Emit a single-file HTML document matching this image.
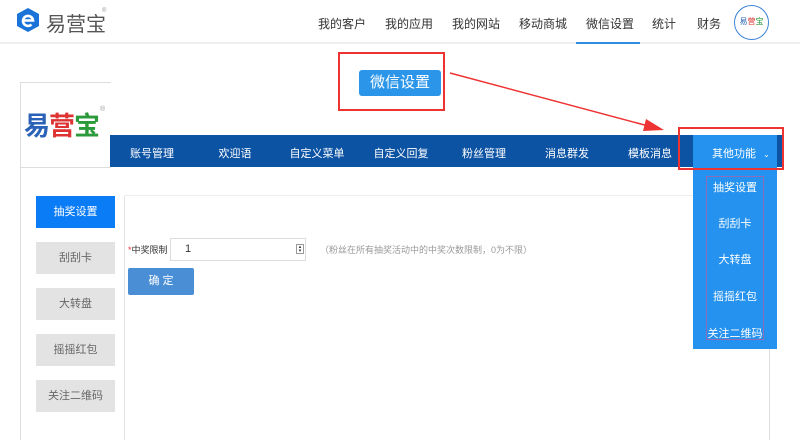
<!DOCTYPE html>
<html><head><meta charset="utf-8"><style>
*{margin:0;padding:0;box-sizing:border-box}
body{width:800px;height:440px;overflow:hidden;background:#fff;font-family:"Liberation Sans","Noto Sans CJK SC",sans-serif;position:relative;font-size:12px;color:#333}
.a{position:absolute}
.nav span{position:absolute;top:15px;font-size:12px;color:#333}
.bar span{position:absolute;top:10px;font-size:11px;color:#fff;transform:translateX(-50%)}
.tab{position:absolute;left:36px;width:79px;height:32px;background:#e3e3e3;color:#666;font-size:11px;text-align:center;line-height:32px}
.dd span{position:absolute;left:0;width:84px;text-align:center;font-size:11px;color:#fff}
</style></head><body>
<div class="a" style="left:0;top:0;width:800px;height:44px;border-bottom:2px solid #eee"></div>
<svg class="a" style="left:15px;top:7px" width="26" height="26" viewBox="0 0 26 26"><polygon points="13,1 24,7 24,19 13,25 2,19 2,7" fill="#1a73d8"/><path d="M8 13.5h10a5 5 0 1 0-1.5 4" stroke="#fff" stroke-width="2.6" fill="none"/></svg>
<div class="a" style="left:46px;top:8px;font-size:20px;color:#555">易营宝</div>
<div class="a" style="left:102px;top:8px;font-size:6px;color:#999">®</div>
<div class="nav"><span style="left:318px">我的客户</span><span style="left:385px">我的应用</span><span style="left:452px">我的网站</span><span style="left:519px">移动商城</span><span style="left:586px">微信设置</span><span style="left:652px">统计</span><span style="left:697px">财务</span></div>
<div class="a" style="left:576px;top:42px;width:64px;height:2px;background:#2d8ee0"></div>
<div class="a" style="left:734px;top:5px;width:35px;height:35px;border:1.5px solid #3b82d6;border-radius:50%;font-size:8px;line-height:32px;text-align:center;color:#2a62b8">易<span style="color:#d33">营</span><span style="color:#2a9a3a">宝</span></div>
<div class="a" style="left:338px;top:52px;width:107px;height:59px;border:2px solid #e33"></div>
<div class="a" style="left:359px;top:70px;width:82px;height:26px;background:#2b95ea;border-radius:3px;color:#fff;font-size:15px;text-align:center;line-height:26px">微信设置</div>
<svg class="a" style="left:0;top:0" width="800" height="440"><line x1="450" y1="73" x2="652" y2="127" stroke="#e33" stroke-width="1.5"/><polygon points="664,130 646,119 643,131" fill="#e33"/></svg>
<div class="a" style="left:20px;top:82px;width:91px;height:86px;border:1px solid #ddd;border-right:none"></div>
<div class="a" style="left:24px;top:106px;font-size:26px;font-weight:bold;letter-spacing:-1px"><span style="color:#2a62b8">易</span><span style="color:#d33">营</span><span style="color:#2a9a3a">宝</span></div>
<div class="a" style="left:100px;top:106px;font-size:7px;color:#999">®</div>
<div class="a" style="left:20px;top:167px;width:1px;height:273px;background:#ddd"></div>
<div class="a" style="left:124px;top:195px;width:646px;height:245px;border-left:1px solid #e5e5e5;border-top:1px solid #eee;border-right:1px solid #ddd"></div>
<div class="tab" style="top:196px;background:#0a7cf6;color:#fff">抽奖设置</div>
<div class="tab" style="top:242px">刮刮卡</div>
<div class="tab" style="top:288px">大转盘</div>
<div class="tab" style="top:334px">摇摇红包</div>
<div class="tab" style="top:380px">关注二维码</div>
<div class="a" style="left:128px;top:243px;font-size:9px;color:#333"><span style="color:#e33">*</span>中奖限制</div>
<div class="a" style="left:170px;top:238px;width:136px;height:23px;border:1px solid #ddd;font-size:11px;padding:4px 0 0 14px">1</div>
<div class="a" style="left:296px;top:244px;width:8px;height:10px;border:1px solid #999;font-size:5px;line-height:4px;text-align:center">▴<br>▾</div>
<div class="a" style="left:320px;top:243px;font-size:9px;color:#999">（粉丝在所有抽奖活动中的中奖次数限制，0为不限）</div>
<div class="a" style="left:128px;top:268px;width:66px;height:27px;background:#4a8fd6;border-radius:2px;color:#fff;font-size:11px;text-align:center;line-height:27px">确 定</div>
<div class="a bar" style="left:110px;top:135px;width:672px;height:32px;background:#0d53a4">
<span style="left:42px">账号管理</span><span style="left:125px">欢迎语</span><span style="left:207px">自定义菜单</span><span style="left:291px">自定义回复</span><span style="left:374px">粉丝管理</span><span style="left:457px">消息群发</span><span style="left:540px">模板消息</span></div>
<div class="a" style="left:693px;top:135px;width:84px;height:214px;background:#2492ee"></div>
<div class="a" style="left:712px;top:145px;color:#fff;font-size:11px">其他功能 <span style="font-size:8px;margin-left:4px">⌄</span></div>
<div class="a" style="left:678px;top:127px;width:106px;height:43px;border:2px solid #e33"></div>
<div class="a" style="left:706px;top:176px;width:58px;height:164px;border:1px solid #8a6fb8"></div>
<div class="a dd" style="left:693px;top:0"><span style="top:179px">抽奖设置</span><span style="top:215px">刮刮卡</span><span style="top:251px">大转盘</span><span style="top:288px">摇摇红包</span><span style="top:325px">关注二维码</span></div>
</body></html>
